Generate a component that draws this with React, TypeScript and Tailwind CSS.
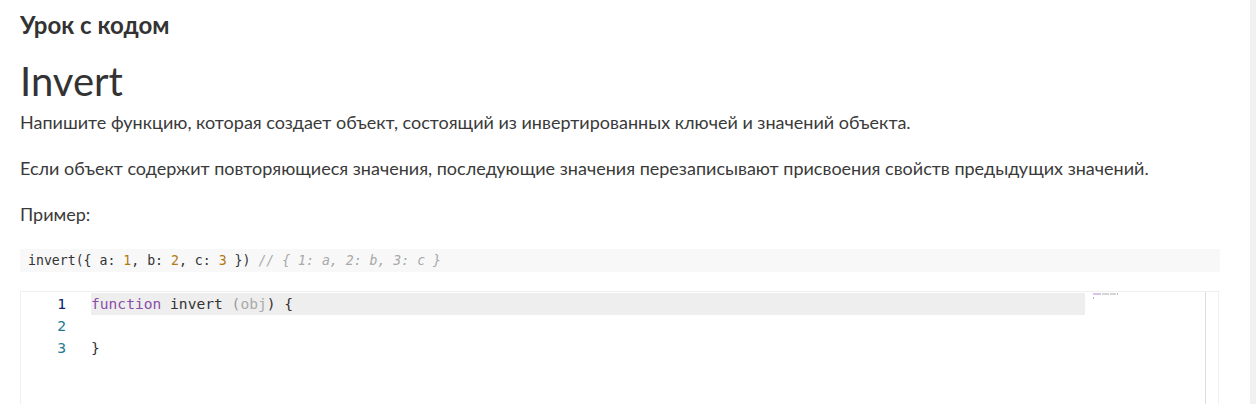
import React from "react";

const lato = { fontFamily: "Lato, 'Noto Sans', sans-serif" };

export default function App() {
  return (
    <div className="flex h-[404px] overflow-hidden bg-white text-[#3a3a3a]" style={lato}>
      <main className="flex-1 pl-[20px] pr-[30px] pt-[9px] min-w-0">
        <h3 className="text-[24px] leading-[32px] font-bold text-[#333]">Урок с кодом</h3>
        <h1 className="mt-[17px] text-[40px] leading-[46px] font-normal text-[#333]">Invert</h1>
        <div className="mt-[6px] text-[18px] leading-[24px] text-[#3a3a3a]">
          <p>Напишите функцию, которая создает объект, состоящий из инвертированных ключей и значений объекта.</p>
          <p className="mt-[22px]">
            Если объект содержит повторяющиеся значения, последующие значения перезаписывают присвоения свойств предыдущих значений.
          </p>
          <p className="mt-[22px]">Пример:</p>
        </div>

        <pre className="mt-[23px] h-[23px] bg-[#f8f8f8] px-[8px] text-[13.2px] leading-[23px] text-[#333] font-['DejaVu_Sans_Mono',monospace]">
          invert({"{"} a: <span className="text-[#b07a10]">1</span>, b: <span className="text-[#b07a10]">2</span>, c:{" "}
          <span className="text-[#b07a10]">3</span> {"})"}{" "}
          <span className="italic text-[#a8a8a8]">{"// { 1: a, 2: b, 3: c }"}</span>
        </pre>

        <div className="mt-[19px] flex h-[140px] border-t border-l border-[#efefef]">
          <div className="w-[45px] pt-px text-right text-[14.6px] leading-[22px] font-['DejaVu_Sans_Mono',monospace]">
            <div className="text-[#0b216f]">1</div>
            <div className="text-[#237893]">2</div>
            <div className="text-[#237893]">3</div>
          </div>
          <div className="ml-[25px] w-[994px] pt-px text-[14.6px] leading-[22px] text-[#333] font-['DejaVu_Sans_Mono',monospace] whitespace-pre">
            <div className="bg-[#eeeeee]">
              <span className="text-[#8a4fa8]">function</span> invert <span className="text-[#999]">(</span>
              <span className="text-[#aaa]">obj</span>) {"{"}
            </div>
            <div>&nbsp;</div>
            <div>{"}"}</div>
          </div>
          <div className="ml-[8px] w-[112px] pt-[1px]">
            <div className="flex gap-px h-[2px]">
              <span className="w-[8px] bg-[#d9c4e6]" />
              <span className="w-[7px] bg-[#d4d4d4]" />
              <span className="w-[6px] bg-[#d4d4d4]" />
              <span className="w-[1px] bg-[#bbb]" />
            </div>
            <div className="mt-[2px] h-[2px] w-[1px] bg-[#bbb]" />
          </div>
          <div className="w-[14px] border-l border-r border-[#dedede] border-r-[#f0f0f0]" />
        </div>
      </main>
      <div className="w-[6px] bg-[#f1f1f1]" />
    </div>
  );
}
